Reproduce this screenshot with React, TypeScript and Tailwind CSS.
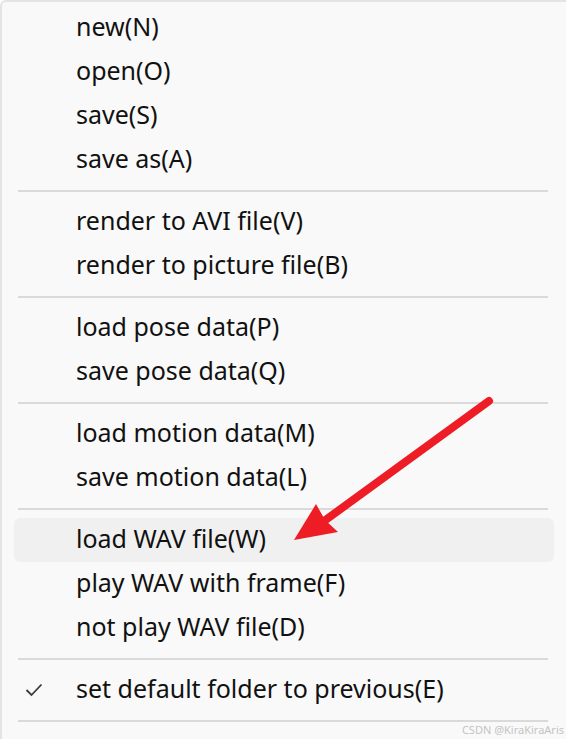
const groups: string[][] = [
  ['new(N)', 'open(O)', 'save(S)', 'save as(A)'],
  ['render to AVI file(V)', 'render to picture file(B)'],
  ['load pose data(P)', 'save pose data(Q)'],
  ['load motion data(M)', 'save motion data(L)'],
  ['load WAV file(W)', 'play WAV with frame(F)', 'not play WAV file(D)'],
  ['set default folder to previous(E)'],
];

function Check() {
  return (
    <svg width="18" height="14" viewBox="0 0 18 14" className="text-[#3a3a3a]">
      <path d="M1.5 7 L6.5 12 L16.5 1.5" fill="none" stroke="currentColor" strokeWidth="1.8" />
    </svg>
  );
}

function Row({ label, hover, checked }: { label: string; hover?: boolean; checked?: boolean }) {
  return (
    <div
      className={`mx-3 h-[44px] flex items-center rounded-md ${hover ? 'bg-[#f0f0f0]' : ''}`}
    >
      <div className="w-[62px] flex pl-[11px]">{checked && <Check />}</div>
      <span className="mb-[4px] text-[25px] text-[#111111] leading-none">{label}</span>
    </div>
  );
}

export default function App() {
  return (
    <div
      className="relative w-[566px] h-[739px] overflow-hidden bg-[#f9f9f9] border-t-2 border-l-2 border-[#e4e4e4] rounded-tl-md pt-1"
      style={{ fontFamily: '"Noto Sans", "Open Sans", sans-serif' }}
    >
      {groups.map((g, gi) => (
        <div key={gi}>
          {g.map((label) => (
            <Row
              key={label}
              label={label}
              hover={label === 'load WAV file(W)'}
              checked={label.startsWith('set default')}
            />
          ))}
          <div className="h-[18px] flex items-center">
            <div className="ml-[16px] w-[530px] h-[2px] bg-[#dadada]" />
          </div>
        </div>
      ))}

      <svg className="absolute left-0 top-0 pointer-events-none" width="566" height="739">
        <line x1="487" y1="399" x2="318" y2="522" stroke="#ee1d25" strokeWidth="8" strokeLinecap="round" />
        <polygon points="292,538 314,502 323,518 336,530" fill="#ee1d25" />
      </svg>

      <span className="absolute right-[2px] bottom-[4px] text-[11px] text-[#c4c4c4] leading-none">
        CSDN @KiraKiraAris
      </span>
    </div>
  );
}
